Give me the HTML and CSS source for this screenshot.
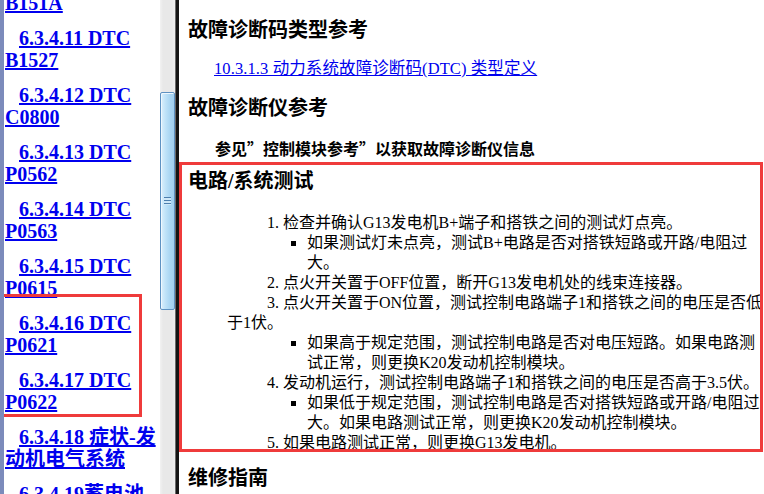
FILE: index.html
```html
<!DOCTYPE html>
<html lang="zh-CN">
<head>
<meta charset="utf-8">
<title>电路/系统测试</title>
<link rel="stylesheet" href="styles.css">
</head>
<body>
<div class="window">
  <nav class="toc">
    <div class="toc-list">
      <p class="toc-item"><a class="toc-link" href="#">6.3.4.10 DTC B151A</a></p>
      <p class="toc-item"><a class="toc-link" href="#">6.3.4.11 DTC B1527</a></p>
      <p class="toc-item"><a class="toc-link" href="#">6.3.4.12 DTC C0800</a></p>
      <p class="toc-item"><a class="toc-link" href="#">6.3.4.13 DTC P0562</a></p>
      <p class="toc-item"><a class="toc-link" href="#">6.3.4.14 DTC P0563</a></p>
      <p class="toc-item"><a class="toc-link" href="#">6.3.4.15 DTC P0615</a></p>
      <p class="toc-item"><a class="toc-link" href="#">6.3.4.16 DTC P0621</a></p>
      <p class="toc-item"><a class="toc-link" href="#">6.3.4.17 DTC P0622</a></p>
      <p class="toc-item"><a class="toc-link" href="#">6.3.4.18 症状-发动机电气系统</a></p>
      <p class="toc-item"><a class="toc-link" href="#">6.3.4.19蓄电池</a></p>
    </div>
    <div class="toc-mark"></div>
  </nav>
  <div class="vscroll"><div class="vscroll-thumb"><span class="grip"></span></div></div>
  <div class="splitter"></div>
  <main class="page">
    <div class="sec-title first">故障诊断码类型参考</div>
    <p class="ref"><a class="ref-link" href="#">10.3.1.3 动力系统故障诊断码(DTC) 类型定义</a></p>
    <div class="sec-title after-ref">故障诊断仪参考</div>
    <p class="note">参见”控制模块参考”以获取故障诊断仪信息</p>
    <div class="sec-title after-note">电路/系统测试</div>
    <ol class="steps">
      <li class="step">检查并确认G13发电机B+端子和搭铁之间的测试灯点亮。
        <ul class="sub">
          <li class="sub-item">如果测试灯未点亮，测试B+电路是否对搭铁短路或开路/电阻过大。</li>
        </ul>
      </li>
      <li class="step">点火开关置于OFF位置，断开G13发电机处的线束连接器。</li>
      <li class="step">点火开关置于ON位置，测试控制电路端子1和搭铁之间的电压是否低于1伏。
        <ul class="sub">
          <li class="sub-item">如果高于规定范围，测试控制电路是否对电压短路。如果电路测试正常，则更换K20发动机控制模块。</li>
        </ul>
      </li>
      <li class="step">发动机运行，测试控制电路端子1和搭铁之间的电压是否高于3.5伏。
        <ul class="sub">
          <li class="sub-item">如果低于规定范围，测试控制电路是否对搭铁短路或开路/电阻过大。如果电路测试正常，则更换K20发动机控制模块。</li>
        </ul>
      </li>
      <li class="step">如果电路测试正常，则更换G13发电机。</li>
    </ol>
    <div class="sec-title after-steps">维修指南</div>
    <div class="page-mark"></div>
  </main>
</div>
</body>
</html>
```

FILE: styles.css
```css
html, body {
  margin: 0;
  padding: 0;
  height: 100%;
  overflow: hidden;
  background: #ffffff;
}

.window {
  display: flex;
  width: 764px;
  height: 494px;
  overflow: hidden;
  background: #ffffff;
  text-autospace: no-autospace;
}

/* ---------- left table of contents ---------- */
.toc {
  position: relative;
  flex: none;
  width: 160px;
  box-sizing: border-box;
  border-left: 4px solid #7c8bbb;
  padding-left: 1px;
  overflow: hidden;
  font-family: "Liberation Serif", "Noto Sans CJK SC", serif;
  font-weight: bold;
  font-size: 20px;
  line-height: 22px;
}

.toc-list {
  margin-top: -30px;
}

.toc-item {
  margin: 0 0 13px;
  text-indent: 14px;
}

.toc-link {
  color: #0000ee;
  text-decoration: underline;
}

.toc-mark {
  position: absolute;
  left: -4px;
  top: 294px;
  width: 142px;
  height: 123px;
  box-sizing: border-box;
  border: 3px solid #ef3b3b;
}

/* ---------- scrollbar ---------- */
.vscroll {
  flex: none;
  width: 15px;
  height: 100%;
  box-sizing: border-box;
  padding-top: 92px;
  background: linear-gradient(to right, #f2f2f2 0, #e8e8e8 3px, #e8e8e8 12px, #efefef 15px);
}

.vscroll-thumb {
  width: 15px;
  height: 218px;
  box-sizing: border-box;
  border: 1px solid #5f92c2;
  border-radius: 2px;
  background: linear-gradient(to right, #dcf0fc 0, #bfe2f8 35%, #a9d5f2 70%, #a2cfee 100%);
  box-shadow: inset 1px 1px 0 #eef8ff;
  display: flex;
  align-items: center;
  justify-content: center;
}

.grip {
  display: block;
  width: 7px;
  height: 8px;
  background: repeating-linear-gradient(to bottom, #4d7fae 0, #4d7fae 1px, #cfe8f8 1px, #cfe8f8 3px);
}

.splitter {
  flex: none;
  width: 4px;
  height: 100%;
  background: linear-gradient(to right, #6a6a6a 0, #6a6a6a 1px, #141414 1px, #141414 4px);
}

/* ---------- main page ---------- */
.page {
  position: relative;
  flex: none;
  width: 585px;
  box-sizing: border-box;
  padding: 18px 0 0 9px;
  font-family: "Liberation Serif", "Noto Sans CJK SC", serif;
  font-size: 16px;
  line-height: 20px;
  color: #000000;
}

.sec-title {
  margin: 0;
  font-size: 20px;
  line-height: 24px;
  font-weight: bold;
}

.sec-title.after-ref {
  margin-top: 17px;
}

.sec-title.after-note {
  margin-top: 11px;
}

.sec-title.after-steps {
  margin-top: 13px;
}

.ref {
  margin: 17px 0 0;
  padding-left: 26px;
  font-size: 16.5px;
  letter-spacing: 0.1px;
}

.ref-link {
  color: #0000ee;
  text-decoration: underline;
}

.note {
  margin: 18px 0 0;
  padding-left: 27px;
  font-family: "Noto Sans CJK SC", "Liberation Serif", sans-serif;
  font-weight: bold;
}

.steps {
  margin: 20px 0 0;
  padding: 0 0 0 39px;
  list-style: decimal inside;
}

.step {
  text-indent: 40px;
}

.sub {
  margin: 0;
  padding: 0 0 0 80px;
  text-indent: 0;
  list-style: square outside;
}

.sub-item {
  text-indent: 0;
}

.page-mark {
  position: absolute;
  left: 0;
  top: 162px;
  width: 584px;
  height: 290px;
  box-sizing: border-box;
  border: 3px solid #ef3b3b;
}
```
